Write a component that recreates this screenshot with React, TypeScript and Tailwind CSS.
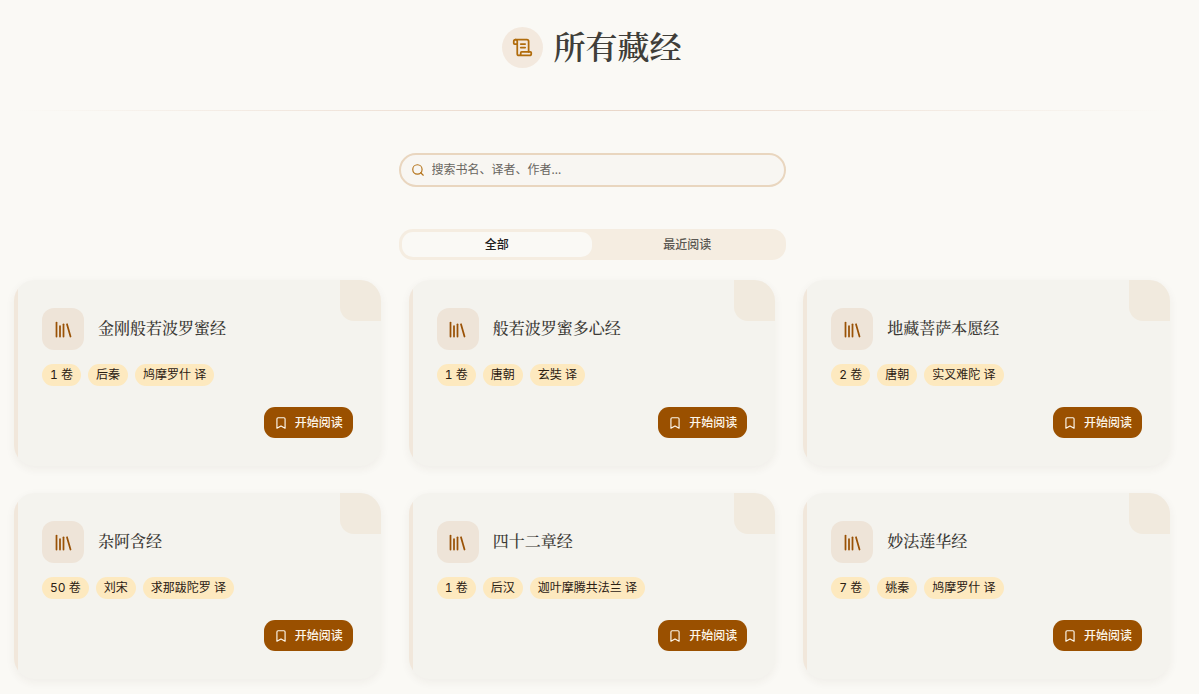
import { Bookmark, ScrollText, Search } from "lucide-react";
import { useState } from "react";

const books = [
    { title: "金刚般若波罗蜜经", volumes: 1, dynasty: "后秦", translator: "鸠摩罗什" },
    { title: "般若波罗蜜多心经", volumes: 1, dynasty: "唐朝", translator: "玄奘" },
    { title: "地藏菩萨本愿经", volumes: 2, dynasty: "唐朝", translator: "实叉难陀" },
    { title: "杂阿含经", volumes: 50, dynasty: "刘宋", translator: "求那跋陀罗" },
    { title: "四十二章经", volumes: 1, dynasty: "后汉", translator: "迦叶摩腾共法兰" },
    { title: "妙法莲华经", volumes: 7, dynasty: "姚秦", translator: "鸠摩罗什" },
];

const tabs = ["全部", "最近阅读"];

const BooksIcon = () => (
    <svg viewBox="0 0 24 24" fill="none" stroke="currentColor" strokeWidth="2" strokeLinecap="round" strokeLinejoin="round" className="size-[21px]" aria-hidden="true">
        <path d="m16 6 4 14" />
        <path d="M12 6v14" />
        <path d="M8 8v12" />
        <path d="M4 4v16" />
    </svg>
);

const Badge = ({ children }: { children: React.ReactNode }) => (
    <span className="rounded-full bg-[#fde9bf] px-2 py-[3px] font-['Inter','Noto_Sans_CJK_SC',sans-serif] text-xs/[16px] text-[#2b2013] tabular-nums">{children}</span>
);

const BookCard = ({ book }: { book: (typeof books)[number] }) => {
    return (
        <article className="relative flex flex-col overflow-hidden rounded-[21px] bg-[#f4f3ee] p-7 shadow-[0_3px_10px_rgba(60,50,30,0.06)]">
            <div className="absolute inset-y-0 left-0 w-1 bg-[#f1e7db]" />
            <div className="absolute top-0 right-0 size-[41px] rounded-bl-[14px] bg-[#f1eade]" />
            <div className="flex items-center gap-3.5">
                <div className="flex size-[42px] shrink-0 items-center justify-center rounded-xl bg-[#eee4d8] text-[#9a5206]">
                    <BooksIcon />
                </div>
                <h2 className="pb-0.5 font-['Noto_Serif_CJK_SC','Noto_Serif_SC','Liberation_Serif','Noto_Sans_CJK_SC',serif] text-base font-medium text-[#3b3935]">{book.title}</h2>
            </div>
            <div className="mt-3.5 flex flex-wrap gap-[7px]">
                <Badge>{book.volumes} 卷</Badge>
                <Badge>{book.dynasty}</Badge>
                <Badge>{book.translator} 译</Badge>
            </div>
            <div className="mt-[21px] flex justify-end">
                <button type="button" className="flex h-[31px] items-center gap-[7px] rounded-[11px] bg-[#9a5000] px-2.5 text-xs font-medium text-[#fdf6ea]">
                    <Bookmark size={14} />
                    开始阅读
                </button>
            </div>
        </article>
    );
};

const App = () => {
    const [active, setActive] = useState(tabs[0]);
    const [query, setQuery] = useState("");

    return (
        <main className="min-h-screen bg-[#faf9f5] pt-[27px] pr-[29px] pb-4 pl-3.5 font-['Noto_Sans','Noto_Sans_CJK_SC',sans-serif]">
            <header className="flex items-center justify-center gap-2.5">
                <div className="flex size-[41px] items-center justify-center rounded-full bg-[#f3e9de] text-[#b06c0c]">
                    <ScrollText size={21} />
                </div>
                <h1 className="pb-1 font-['Noto_Serif_CJK_SC','Noto_Serif_SC','Liberation_Serif','Noto_Sans_CJK_SC',serif] text-[32px]/[37px] font-semibold text-[#403e39]">所有藏经</h1>
            </header>
            <div className="mt-[42px] h-px bg-linear-to-r from-transparent via-[#e9d6c8] to-transparent" />

            <div className="mx-auto mt-[42px] max-w-[387px]">
                <div className="flex h-[34px] items-center gap-[7px] rounded-full border-2 border-[#e9d6bf] bg-[#f8f6f2] px-2.5">
                    <Search size={14} className="shrink-0 text-[#b4731a]" />
                    <input
                        type="text"
                        aria-label="搜索书名、译者、作者"
                        value={query}
                        onChange={(e) => setQuery(e.target.value)}
                        placeholder="搜索书名、译者、作者..."
                        className="w-full bg-transparent text-xs text-[#3b3935] outline-none placeholder:text-[#686560]"
                    />
                </div>
                <div role="tablist" className="mt-[42px] flex rounded-[14px] bg-[#f5ede1] p-[3px]">
                    {tabs.map((tab) => (
                        <button
                            key={tab}
                            type="button"
                            role="tab"
                            aria-selected={tab === active}
                            onClick={() => setActive(tab)}
                            className={`h-[25px] flex-1 rounded-[11px] text-xs font-medium ${tab === active ? "bg-[#faf9f5] text-[#22201c]" : "text-[#5b5852]"}`}
                        >
                            {tab}
                        </button>
                    ))}
                </div>
            </div>

            <div className="mt-5 grid grid-cols-3 gap-x-7 gap-y-[27px]">
                {books.map((book) => (
                    <BookCard key={book.title} book={book} />
                ))}
            </div>
        </main>
    );
};

export default App;
